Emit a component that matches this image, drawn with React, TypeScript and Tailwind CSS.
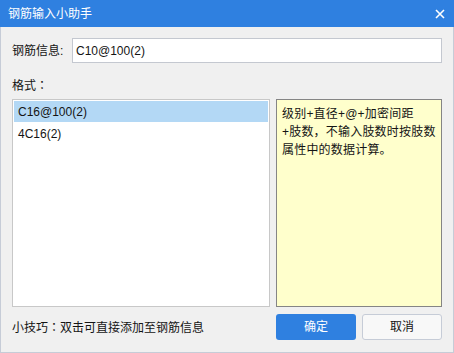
export default function App() {
  const font = { fontFamily: '"Liberation Sans", "Noto Sans CJK SC", sans-serif' };
  const colon = { fontFamily: '"Noto Sans CJK TC", sans-serif' };
  return (
    <div className="w-[454px] h-[353px] flex flex-col bg-[#f0f0f0] text-[12px] text-[#141414]" style={font}>
      <div className="h-[27px] shrink-0 bg-[#2f80e0] flex items-center pl-[8px] pr-[8px] text-white">
        <span>钢筋输入小助手</span>
        <svg className="ml-auto mr-[1px]" width="10" height="10" viewBox="0 0 10 10">
          <path d="M1 1L9 9M9 1L1 9" stroke="#fff" strokeWidth="1.6" />
        </svg>
      </div>
      <div className="flex-1 flex flex-col border-x border-b border-[#c6ccd7] px-[11px] pt-[11px] pb-[11px]">
        <div className="flex items-center h-[25px]">
          <span className="w-[60px] shrink-0">钢筋信息:</span>
          <div className="flex-1 h-[25px] border border-[#c4c8d0] bg-white flex items-center pl-[3px]">
            C10@100(2)
          </div>
        </div>
        <div className="mt-[14px] h-[16px] leading-[16px]">
          格式<span style={colon}>：</span>
        </div>
        <div className="mt-[6px] h-[208px] flex gap-[6px]">
          <div className="w-[258px] border border-[#c8c8c8] bg-white p-[1px] flex flex-col">
            <div className="h-[21px] bg-[#b3d8f5] flex items-center pl-[4px]">C16@100(2)</div>
            <div className="h-[24px] flex items-center pl-[4px]">4C16(2)</div>
          </div>
          <div className="flex-1 border border-[#858585] bg-[#ffffcc] px-[5px] pt-[5px] leading-[18px] whitespace-nowrap tracking-[0.2px]">
            级别+直径+@+加密间距
            <br />
            +肢数，不输入肢数时按肢数
            <br />
            属性中的数据计算。
          </div>
        </div>
        <div className="mt-[7px] flex items-center h-[26px]">
          <span>
            小技巧<span style={colon}>：</span>双击可直接添加至钢筋信息
          </span>
          <button className="ml-auto w-[80px] h-[26px] rounded-[3px] bg-[#2f80e0] text-white">确定</button>
          <button className="ml-[6px] w-[80px] h-[26px] rounded-[3px] border border-[#c6ccd7] bg-[#f8f8f8]">取消</button>
        </div>
      </div>
    </div>
  );
}
